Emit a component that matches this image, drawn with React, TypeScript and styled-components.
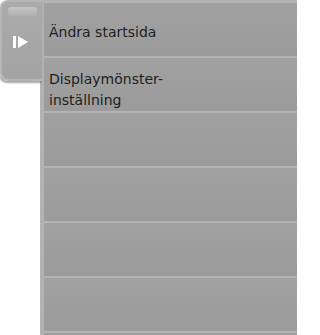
import React from "react";
import styled, { createGlobalStyle } from "styled-components";

const GlobalStyle = createGlobalStyle`
  html, body {
    margin: 0;
    padding: 0;
    background: #ffffff;
  }
  body {
    font-family: "DejaVu Sans", "Liberation Sans", sans-serif;
  }
`;

const Screen = styled.div`
  width: 297px;
  height: 335px;
  display: flex;
  overflow: hidden;
  background: #ffffff;
`;

const SideTab = styled.div`
  width: 42px;
  height: 81px;
  flex: none;
  box-sizing: border-box;
  display: flex;
  flex-direction: column;
  align-items: center;
  padding-top: 5px;
  background: linear-gradient(to bottom, #ababab, #a3a3a3);
  border: 2px solid #b6b6b6;
  border-right: none;
  border-radius: 8px 0 0 8px;
  box-shadow: -1px 2px 2px rgba(0, 0, 0, 0.35);
  margin-right: -2px;
  position: relative;
  z-index: 1;
`;

const Handle = styled.div`
  width: 29px;
  height: 9px;
  border-radius: 3px;
  background: linear-gradient(to bottom, #c4c4c4, #b0b0b0);
`;

const PlayIcon = styled.svg`
  margin-top: 20px;
  margin-left: -2px;
`;

const List = styled.div`
  flex: 1;
  display: flex;
  flex-direction: column;
  box-sizing: border-box;
  border-left: 4px solid #b3b3b3;
  border-top: 3px solid #b3b3b3;
  background: #9d9d9d;
`;

const Row = styled.div<{ $twoLine?: boolean }>`
  height: 55px;
  flex: none;
  box-sizing: border-box;
  border-bottom: 2px solid #b4b4b4;
  background: linear-gradient(to bottom, #a1a1a1, #9b9b9b);
  padding: ${({ $twoLine }) => ($twoLine ? "11px" : "19px")} 0 0 5px;
  font-size: 14px;
  line-height: 21px;
  color: #1e1e1e;
`;

const items: { label: string[] }[] = [
  { label: ["Ändra startsida"] },
  { label: ["Displaymönster-", "inställning"] },
  { label: [] },
  { label: [] },
  { label: [] },
  { label: [] },
];

export default function App() {
  return (
    <>
      <GlobalStyle />
      <Screen>
        <SideTab>
          <Handle />
          <PlayIcon width="16" height="12" viewBox="0 0 16 12">
            <rect x="0" y="0" width="3" height="12" fill="#ffffff" />
            <polygon points="5,0 15,6 5,12" fill="#ffffff" />
          </PlayIcon>
        </SideTab>
        <List>
          {items.map((item, i) => (
            <Row key={i} $twoLine={item.label.length > 1}>
              {item.label.map((l) => (
                <div key={l}>{l}</div>
              ))}
            </Row>
          ))}
        </List>
      </Screen>
    </>
  );
}
